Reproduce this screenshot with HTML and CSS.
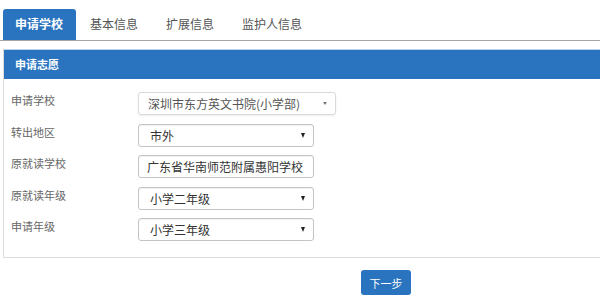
FILE: index.html
```html
<!DOCTYPE html>
<html lang="zh">
<head>
<meta charset="utf-8">
<link rel="stylesheet" href="styles.css">
</head>
<body>
<div class="page">
  <ul class="tabs">
    <li class="tab active">申请学校</li>
    <li class="tab">基本信息</li>
    <li class="tab">扩展信息</li>
    <li class="tab">监护人信息</li>
  </ul>
  <div class="panel">
    <div class="panel-head">申请志愿</div>
    <div class="panel-body">
      <div class="row">
        <label class="label">申请学校</label>
        <div class="control select-bs wide"><span class="val light">深圳市东方英文书院(小学部)</span><span class="caret small"></span></div>
      </div>
      <div class="row">
        <label class="label">转出地区</label>
        <div class="control"><span class="val">市外</span><span class="caret"></span></div>
      </div>
      <div class="row">
        <label class="label">原就读学校</label>
        <div class="control input"><span class="val">广东省华南师范附属惠阳学校</span></div>
      </div>
      <div class="row">
        <label class="label">原就读年级</label>
        <div class="control"><span class="val">小学二年级</span><span class="caret"></span></div>
      </div>
      <div class="row">
        <label class="label">申请年级</label>
        <div class="control"><span class="val">小学三年级</span><span class="caret"></span></div>
      </div>
    </div>
  </div>
  <div class="actions">
    <button class="btn">下一步</button>
  </div>
</div>
</body>
</html>
```

FILE: styles.css
```css
html, body {
  margin: 0;
  padding: 0;
  background: #fff;
}
.page {
  width: 600px;
  height: 304px;
  overflow: hidden;
  font-family: "Noto Sans CJK SC", "Noto Sans", "Liberation Sans", sans-serif;
}
.tabs {
  list-style: none;
  margin: 0;
  padding: 9px 0 0 3px;
  display: flex;
  border-bottom: 1px solid #a6a6a6;
  height: 31px;
}
.tab {
  height: 31px;
  line-height: 30px;
  padding: 0 14px;
  font-size: 12px;
  color: #555;
}
.tab.active {
  background: #2a74bf;
  color: #fff;
  font-weight: bold;
  border-radius: 3px 3px 0 0;
  padding: 0 13px 0 12px;
}
.panel {
  margin: 8px 0 0 3px;
  border: 1px solid #dcdcdc;
  border-top: 1px solid #b9d6ef;
  border-right: none;
}
.panel-head {
  background: #2a74bf;
  color: #fff;
  font-weight: bold;
  font-size: 11px;
  height: 29px;
  line-height: 28px;
  padding-left: 11px;
}
.panel-body {
  padding: 13px 0 16px 7px;
  display: flex;
  flex-direction: column;
  gap: 8.5px;
}
.row {
  display: flex;
  align-items: flex-start;
  height: 23px;
}
.label {
  width: 127px;
  font-size: 11px;
  color: #666;
  line-height: 16px;
  padding-top: 0;
}
.control {
  position: relative;
  box-sizing: border-box;
  width: 176px;
  height: 23px;
  border: 1px solid #c4c4c4;
  border-radius: 3px;
  box-shadow: inset 0 1px 1px rgba(0,0,0,0.06);
  display: flex;
  align-items: center;
  padding: 0 10px 0 11px;
  font-size: 12px;
  color: #333;
}
.control.wide {
  width: 198px;
  border-color: #dadada;
  box-shadow: 0 1px 2px rgba(0,0,0,0.08);
  padding-left: 9px;
}
.val {
  flex: 1;
  white-space: nowrap;
}
.val.light {
  color: #555;
}
.input {
  padding-left: 8px;
}
.caret {
  width: 0;
  height: 0;
  border-left: 2.5px solid transparent;
  border-right: 2.5px solid transparent;
  border-top: 5px solid #222;
  margin-right: -2px;
}
.caret.small {
  border-left-width: 2px;
  border-right-width: 2px;
  border-top: 3px solid #777;
}
.actions {
  display: flex;
  padding: 12px 0 0 361px;
}
.btn {
  width: 50px;
  height: 25px;
  border: none;
  border-radius: 3px;
  background: #2a74bf;
  color: #fff;
  font-family: "Noto Sans CJK SC", "Noto Sans", sans-serif;
  font-size: 11px;
  padding: 0;
}
```
